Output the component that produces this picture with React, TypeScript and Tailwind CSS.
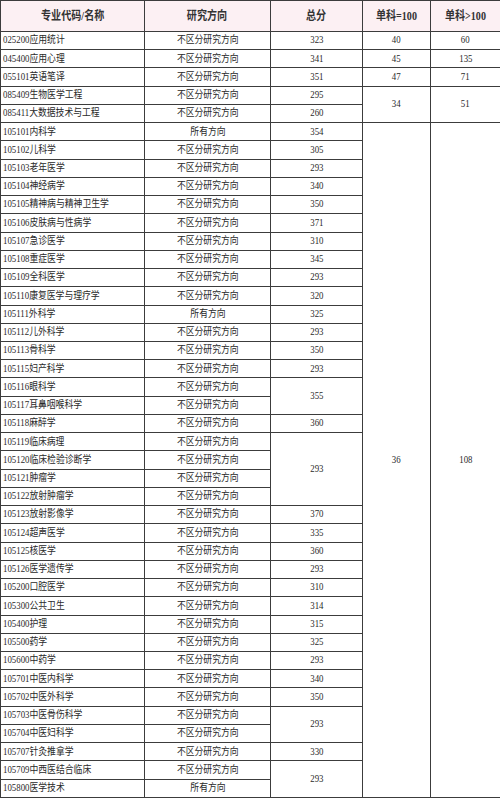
import React from "react";

type Row = {
  name: string;
  dir: string;
  total?: string;
  totalSpan?: number;
  eq?: string;
  gt?: string;
  sideSpan?: number;
};

const A = "不区分研究方向";
const B = "所有方向";

const rows: Row[] = [
  { name: "025200应用统计", dir: A, total: "323", eq: "40", gt: "60" },
  { name: "045400应用心理", dir: A, total: "341", eq: "45", gt: "135" },
  { name: "055101英语笔译", dir: A, total: "351", eq: "47", gt: "71" },
  { name: "085409生物医学工程", dir: A, total: "295", eq: "34", gt: "51", sideSpan: 2 },
  { name: "085411大数据技术与工程", dir: A, total: "260" },
  { name: "105101内科学", dir: B, total: "354", eq: "36", gt: "108", sideSpan: 37 },
  { name: "105102儿科学", dir: A, total: "305" },
  { name: "105103老年医学", dir: A, total: "293" },
  { name: "105104神经病学", dir: A, total: "340" },
  { name: "105105精神病与精神卫生学", dir: A, total: "350" },
  { name: "105106皮肤病与性病学", dir: A, total: "371" },
  { name: "105107急诊医学", dir: A, total: "310" },
  { name: "105108重症医学", dir: A, total: "345" },
  { name: "105109全科医学", dir: A, total: "293" },
  { name: "105110康复医学与理疗学", dir: A, total: "320" },
  { name: "105111外科学", dir: B, total: "325" },
  { name: "105112儿外科学", dir: A, total: "293" },
  { name: "105113骨科学", dir: A, total: "350" },
  { name: "105115妇产科学", dir: A, total: "293" },
  { name: "105116眼科学", dir: A, total: "355", totalSpan: 2 },
  { name: "105117耳鼻咽喉科学", dir: A },
  { name: "105118麻醉学", dir: A, total: "360" },
  { name: "105119临床病理", dir: A, total: "293", totalSpan: 4 },
  { name: "105120临床检验诊断学", dir: A },
  { name: "105121肿瘤学", dir: A },
  { name: "105122放射肿瘤学", dir: A },
  { name: "105123放射影像学", dir: A, total: "370" },
  { name: "105124超声医学", dir: A, total: "335" },
  { name: "105125核医学", dir: A, total: "360" },
  { name: "105126医学遗传学", dir: A, total: "293" },
  { name: "105200口腔医学", dir: A, total: "310" },
  { name: "105300公共卫生", dir: A, total: "314" },
  { name: "105400护理", dir: A, total: "315" },
  { name: "105500药学", dir: A, total: "325" },
  { name: "105600中药学", dir: A, total: "293" },
  { name: "105701中医内科学", dir: A, total: "340" },
  { name: "105702中医外科学", dir: A, total: "350" },
  { name: "105703中医骨伤科学", dir: A, total: "293", totalSpan: 2 },
  { name: "105704中医妇科学", dir: A },
  { name: "105707针灸推拿学", dir: A, total: "330" },
  { name: "105709中西医结合临床", dir: A, total: "293", totalSpan: 2 },
  { name: "105800医学技术", dir: B },
];

const cell = "border border-[#3c3c3c] p-0 align-middle";

// the source image is squeezed horizontally, so every label is narrowed a bit
function Squeezed({ children, left }: { children: React.ReactNode; left?: boolean }) {
  return (
    <span
      className={`inline-block whitespace-nowrap scale-x-[0.84] ${left ? "origin-left" : "origin-center"}`}
    >
      {children}
    </span>
  );
}

export default function App() {
  const font = { fontFamily: '"Liberation Serif", "Noto Sans CJK SC", serif' };
  return (
    <div className="w-[500px] h-[798px] bg-white overflow-hidden" style={font}>
      <table className="w-[500px] table-fixed border-collapse text-[10.5px] leading-none text-[#2a2a2a]">
        <colgroup>
          <col className="w-[144px]" />
          <col className="w-[126px]" />
          <col className="w-[92px]" />
          <col className="w-[68px]" />
          <col className="w-[70px]" />
        </colgroup>
        <thead>
          <tr className="h-[31px] bg-[#fcf0f3] text-[12px] font-bold text-[#333]">
            <th className={cell}><Squeezed>专业代码/名称</Squeezed></th>
            <th className={cell}><Squeezed>研究方向</Squeezed></th>
            <th className={cell}><Squeezed>总分</Squeezed></th>
            <th className={cell}><Squeezed>单科=100</Squeezed></th>
            <th className={cell}><Squeezed>单科&gt;100</Squeezed></th>
          </tr>
        </thead>
        <tbody>
          {rows.map((r) => (
            <tr key={r.name} className="h-[18.24px]">
              <td className={`${cell} pl-[2px] text-left`}>
                <Squeezed left>{r.name}</Squeezed>
              </td>
              <td className={`${cell} text-center`}>
                <Squeezed>{r.dir}</Squeezed>
              </td>
              {r.total !== undefined && (
                <td className={`${cell} text-center`} rowSpan={r.totalSpan ?? 1}>
                  <Squeezed>{r.total}</Squeezed>
                </td>
              )}
              {r.eq !== undefined && (
                <>
                  <td className={`${cell} text-center`} rowSpan={r.sideSpan ?? 1}>
                    <Squeezed>{r.eq}</Squeezed>
                  </td>
                  <td className={`${cell} text-center`} rowSpan={r.sideSpan ?? 1}>
                    <Squeezed>{r.gt}</Squeezed>
                  </td>
                </>
              )}
            </tr>
          ))}
        </tbody>
      </table>
    </div>
  );
}
